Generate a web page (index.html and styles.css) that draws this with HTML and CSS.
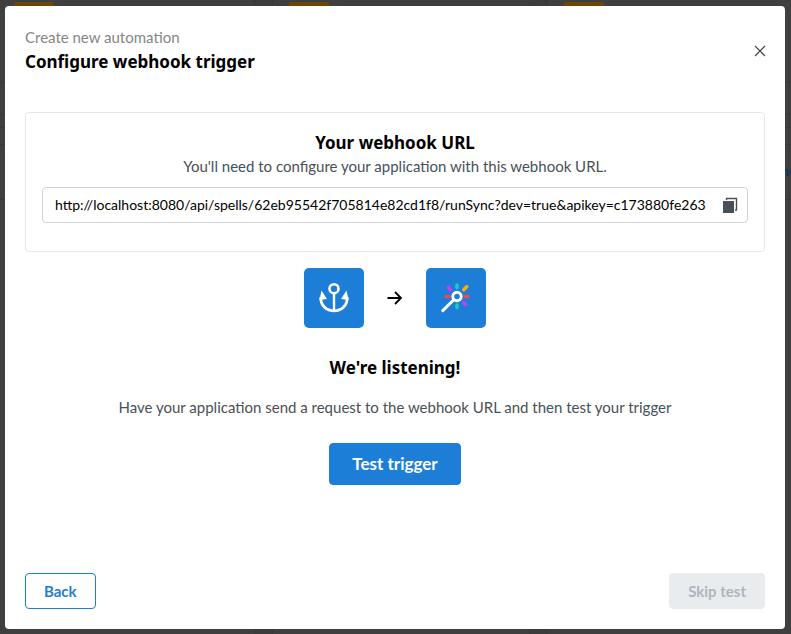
FILE: index.html
```html
<!DOCTYPE html>
<html lang="en">
<head>
<meta charset="utf-8">
<title>Configure webhook trigger</title>
<link rel="stylesheet" href="styles.css">
</head>
<body>
<div class="board" aria-hidden="true">
  <div class="card"><div class="tab"></div><div class="box"></div><div class="rows"></div><div class="action"></div></div>
  <div class="card"><div class="tab"></div><div class="box"></div><div class="rows"></div><div class="action"></div></div>
  <div class="card"><div class="tab"></div><div class="box"></div><div class="rows"></div><div class="action">Sync</div></div>
</div>
<div class="overlay">
  <main class="modal" role="dialog" aria-labelledby="title">
    <header class="header">
      <div>
        <p class="eyebrow">Create new automation</p>
        <h1 class="heading" id="title">Configure webhook trigger</h1>
      </div>
      <button class="icon-button" type="button" aria-label="Close">
        <svg width="12" height="12" viewBox="0 0 12 12" fill="none" stroke="#495057" stroke-width="1.3"><path d="M1 1l10 10M11 1L1 11"/></svg>
      </button>
    </header>
    <section class="panel">
      <h2 class="heading">Your webhook URL</h2>
      <label class="text" for="url">You'll need to configure your application with this webhook URL.</label>
      <div class="field">
        <input id="url" class="url" type="text" readonly value="http://localhost:8080/api/spells/62eb95542f705814e82cd1f8/runSync?dev=true&amp;apikey=c173880fe263">
        <button class="icon-button" type="button" aria-label="Copy">
          <svg width="16" height="16" viewBox="0 0 16 16"><path fill="#495057" d="M1 4h11v12H1z"/><path d="M4.500 3V1.500h10V13H13" fill="none" stroke="#495057" stroke-width="1.400"/></svg>
        </button>
      </div>
    </section>
    <section class="status">
      <div class="flow">
        <span class="tile"><svg width="60" height="60" viewBox="0 0 60 60" fill="none" stroke="#fff"><circle cx="30" cy="20.700" r="4.500" stroke-width="2.600"/><path d="M30 25v18" stroke-width="2.400"/><path d="M16.800 29c-.5 9 6.200 13.800 13.200 13.800S43.700 38 43.200 29" stroke-width="2.800"/><path fill="#fff" stroke="none" d="M17.500 22.500L23 31l-7.500 1zM42.500 22.500L37 31l7.500 1z"/></svg></span>
        <svg width="16" height="14" viewBox="0 0 16 14" fill="none" stroke="#000" stroke-width="1.800"><path d="M.5 7H14M8 1l6 6-6 6"/></svg>
        <span class="tile"><svg width="60" height="60" viewBox="0 0 60 60" fill="none" stroke-linecap="round"><g stroke-width="3.600"><path stroke="#15cfc0" d="M31 17v2.600M31 37v2.600"/><path stroke="#f04a50" d="M20 28.500h2.700M39.300 28.500H42"/><path stroke="#c83cf5" d="M22.500 19.500l2 2.200M37.500 34.500l2 2"/><path stroke="#f7ae08" d="M37.700 21.700l3-3"/></g><circle cx="31" cy="28.500" r="4.200" stroke="#fff" stroke-width="2.900"/><path stroke="#fff" stroke-width="3" d="M27.500 32L16.800 42.600"/></svg></span>
      </div>
      <h2 class="heading">We're listening!</h2>
      <p class="text">Have your application send a request to the webhook URL and then test your trigger</p>
      <button class="button primary" type="button">Test trigger</button>
    </section>
    <footer class="footer">
      <button class="button outline" type="button">Back</button>
      <button class="button" type="button" disabled>Skip test</button>
    </footer>
  </main>
</div>
</body>
</html>
```
FILE: styles.css
```css
* { box-sizing: border-box; }
body { margin: 0; min-height: 100vh; background: #3c3c3c; color: #000; font: 15px/20px Lato, sans-serif; overflow: hidden; }
h1, h2, p { margin: 0; }
button, input { font: inherit; }
svg { display: block; }
.board { display: grid; grid-template-columns: repeat(3, 258px); gap: 17px; margin-left: -3px; height: 100vh; }
.card { border: 1px solid #383838; border-width: 0 1px; background: #3f3f3f; padding-top: 2px; }
.tab { width: 40px; height: 8px; margin: 0 0 72px 16px; border-radius: 2px; background: #6b4700; }
.box { height: 33px; margin-bottom: 12px; border: 1px solid #383838; border-width: 1px 0; }
.rows { height: 17px; border-top: 1px solid #383838; }
.action { height: 56px; padding-right: 8px; border: 1px solid #383838; border-width: 1px 0; color: #0b3258; font-size: 14px; font-weight: bold; line-height: 52px; text-align: right; }
.overlay { position: absolute; inset: 0; display: flex; padding: 6px 6px 5px 5px; }
.modal { flex: 1; display: flex; flex-direction: column; padding: 20px; border-radius: 4px; background: #fff; }
.header { display: flex; justify-content: space-between; align-items: center; margin-bottom: 36px; }
.eyebrow { line-height: 22px; color: #868686; }
.heading { font: bold 17px/28px "Noto Sans", sans-serif; }
.icon-button { display: flex; flex: none; border: 0; padding: 0; background: none; }
.header .icon-button { margin-right: -1px; }
.panel { display: flex; flex-direction: column; align-items: center; padding: 16px 16px 28px; border: 1px solid #e5e8eb; border-radius: 4px; }
.text { color: #495057; line-height: 18px; }
.field { display: flex; align-items: center; align-self: stretch; height: 36px; margin-top: 12px; padding: 0 9px 0 12px; border: 1px solid #ced4da; border-radius: 4px; gap: 11px; }
.url { flex: 1; min-width: 0; padding: 0; border: 0; outline: 0; background: none; font-size: 14px; }
.status { display: flex; flex-direction: column; align-items: center; margin-top: 16px; }
.flow { display: flex; align-items: center; gap: 23px; margin-bottom: 26px; }
.tile { border-radius: 5px; background: #1c7ed6; }
.status .text { margin: 16px 0 27px; }
.button { height: 36px; padding: 0 18px; border: 1px solid #e9ecef; border-radius: 4px; background: #e9ecef; color: #adb5bd; font-weight: bold; }
.primary { height: 42px; padding: 0 22px; border-color: #1c7ed6; background: #1c7ed6; color: #fff; font-size: 17px; }
.outline { border-color: #1c7ed6; background: #fff; color: #1c7ed6; }
.footer { display: flex; justify-content: space-between; margin-top: auto; }
```
